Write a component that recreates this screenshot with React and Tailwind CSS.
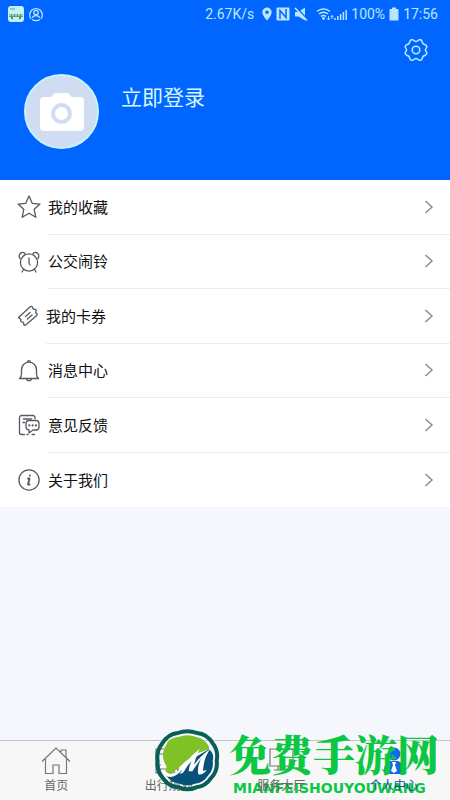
import React from "react";

const Star = () => (
  <path d="M12 1l3.200 7.300 7.800.8-5.800 5.200 1.600 8L12 18.300 5.200 22.300l1.600-8L1 9.100l7.800-.8z" />
);

const Clock = () => (
  <>
    <circle cx="12" cy="12.500" r="8.600" />
    <path d="M12 8v5l1 2M6.500 19.500l-1.500 2.500M17.500 19.500l1.500 2.500" />
    <path d="M3 8.500C1.500 6.500 2 3 5 2.500c1.500-.3 2.700.4 3.300 1.900M21 8.500C22.500 6.500 22 3 19 2.500c-1.500-.3-2.700.4-3.300 1.900" />
  </>
);

const Ticket = () => (
  <>
    <path d="M1.500 13.500L13.200 2.800c.8-.7 1.600-.6 2.200.1.200 1.900 1.200 2.700 3 2.400.9.500 1 1.400.4 2.100-.5 1.300.2 2 1.200 2.300.5.700.3 1.300-.3 1.900L9 20.800c-.8.700-1.800.6-2.300-.2.500-1.700-.3-2.900-2.300-2.800-.9-.4-.9-1.200-.4-2-.3-1.200-1.500-1.300-2.500-2.300z" />
    <path d="M8.500 12.500l4.500-4M10.500 15l4.500-4" />
  </>
);

const Bell = () => (
  <>
    <path d="M2.500 19.500c1.600-1.200 2-2.500 2-4.500v-4c0-4.200 3-7.800 7.500-7.800s7.500 3.600 7.500 7.800v4c0 2 .4 3.300 2 4.500z" />
    <path d="M10.500 3.200c.2-2 2.800-2 3 0M9.500 19.800c.3 2.600 4.700 2.600 5 0" />
  </>
);

const Feedback = () => (
  <>
    <path d="M18 5.500V4.500A2 2 0 0 0 16 2.500H4.500a2 2 0 0 0-2 2v15a2 2 0 0 0 2 2H7.500M10 21.500h1M15 21.500h2.500M6.500 6h8M6 9.500h1.500" />
    <path d="M11.500 7.500h7.500a3 3 0 0 1 3 3v3.500a3 3 0 0 1-3 3h-3l-4 3v-3.200a3 3 0 0 1-3-3v-3.300a3 3 0 0 1 2.500-3z" />
    <g fill="#555960" stroke="none">
      <circle cx="12.300" cy="12.400" r="1.100" />
      <circle cx="15.600" cy="12.400" r="1.100" />
      <circle cx="18.900" cy="12.400" r="1.100" />
    </g>
  </>
);

const Info = () => (
  <>
    <circle cx="12" cy="12" r="10.100" />
    <path d="M11 10.500h1.500l-1.500 6h1.500M12.900 7.300v.4" strokeWidth="1.800" />
  </>
);

const menu = [
  { label: "我的收藏", icon: Star },
  { label: "公交闹铃", icon: Clock },
  { label: "我的卡券", icon: Ticket, tight: true },
  { label: "消息中心", icon: Bell },
  { label: "意见反馈", icon: Feedback },
  { label: "关于我们", icon: Info },
];

const StatusBar = () => (
  <div className="flex h-7 items-center justify-between pl-2 pr-3 text-[#b9e6ff]">
    <div className="flex items-center gap-1">
      <svg viewBox="0 0 16 16" className="size-4">
        <rect width="16" height="16" rx="3" fill="#c3f2f2" />
        <path d="M2 3h5" stroke="#63a1a8" strokeWidth="1" />
        <path d="M1 8h14v3H1z" fill="#5b9a8b" />
        <path d="M1 9h14" stroke="#dff8e8" strokeWidth="1" strokeDasharray="2 1" />
        <path d="M3 12h2M11 12h2" stroke="#355b50" strokeWidth="1.500" />
      </svg>
      <svg viewBox="0 0 16 16" className="size-4" fill="none" stroke="currentColor" strokeWidth="1.300">
        <path d="M3 12.800A6.300 6.300 0 1 1 13 12.800" />
        <circle cx="8" cy="6.500" r="2.200" />
        <path d="M4.300 12c.6-3.300 6.800-3.300 7.400 0M4 13.500c2.500 1.500 5.500 1.500 8 0" />
      </svg>
    </div>
    <div className="flex items-center gap-1">
      <span className="pr-1">2.67K/s</span>
      <svg viewBox="0 0 10 14" className="h-3.5 w-2.5">
        <path fillRule="evenodd" fill="currentColor" d="M5 .5a4.700 4.700 0 0 1 4.700 4.700C9.700 8.500 5 13.500 5 13.500S.3 8.500.3 5.200A4.700 4.700 0 0 1 5 .5zm0 3a1.800 1.800 0 1 0 0 3.600A1.800 1.800 0 0 0 5 3.500z" />
      </svg>
      <svg viewBox="0 0 14 14" className="size-3.5">
        <rect x=".5" y=".5" width="13" height="13" rx="1" fill="currentColor" />
        <path d="M4 12V3.500l6 7V2" fill="none" stroke="#0066ff" strokeWidth="1.500" />
      </svg>
      <svg viewBox="0 0 14 14" className="size-3.5">
        <path d="M1 5h3.500L11 .5v13L4.500 9.500H1z" fill="currentColor" />
        <path d="M2.500.5l11 12" stroke="#0066ff" strokeWidth="1.500" />
        <path d="M1 1l12 12.500" stroke="currentColor" strokeWidth="1.600" />
      </svg>
      <svg viewBox="0 0 18 14" className="ml-1 h-3.5 w-[18px]" fill="none" stroke="currentColor" strokeWidth="1.500">
        <path d="M1 4.500c3.500-3.300 9.500-3.300 13 0M3 7c2.500-2.300 6.500-2.300 9 0M5 9.500c1.500-1.300 3.500-1.300 5 0" />
        <circle cx="7.500" cy="11.500" r=".7" />
        <path d="M12.500 13V9M11 11.500l1.500 1.500 1.500-1.500M16 8.500V12M14.700 10L16 8.500l1.300 1.500" strokeWidth="1" />
      </svg>
      <svg viewBox="0 0 13 14" className="-ml-1 h-3.5 w-[13px]" stroke="currentColor" strokeWidth="1.500">
        <path d="M1 13v-2M3.800 13v-4M6.600 13V7M9.400 13V5M12.200 13V3" />
      </svg>
      <span>100%</span>
      <svg viewBox="0 0 10 14" className="h-3.5 w-2.5" fill="currentColor">
        <path d="M3 .5h4V2h2l.5.500V13.500H.5V2.500L1 2h2z" />
      </svg>
      <span>17:56</span>
    </div>
  </div>
);

const Header = () => (
  <header className="h-[180px] bg-[#0066ff] font-[Roboto,sans-serif] text-sm">
    <StatusBar />
    <div className="flex items-start pl-6 pr-[22px] pt-2.5">
      <button className="mt-9 size-[75px] shrink-0 rounded-full border-2 border-[#c5f2ff] bg-[#cfdcf1]" aria-label="头像">
        <svg viewBox="0 0 71 71" className="size-full">
          <path d="M17 21h8l4-4h13l4 4h8q4 0 4 4v26q0 4-4 4H18q-4 0-4-4V25q0-4 4-4z" fill="#fff" />
          <circle cx="35.500" cy="37.500" r="8.500" fill="none" stroke="#cfdcf1" strokeWidth="4" />
        </svg>
      </button>
      <a href="#" className="ml-[22px] mt-[42px] font-['Noto_Sans_CJK_SC',sans-serif] text-[21px] leading-8 text-[#d9f6ff]">
        立即登录
      </a>
      <button className="ml-auto size-6 text-[#b9eaff]" aria-label="设置">
        <svg viewBox="0 0 24 24" fill="none" stroke="currentColor" strokeWidth="1.500" strokeLinejoin="round" className="size-full">
          <path d="M7.500 1.800Q9 1.500 10 2.600q2 1.600 4 0 1-1.100 2.500-.8 1.200.4 1.700 1.800.4 2.600 3 3.200 1.500.6 1.600 2 0 .8-.8 1.700-1.300 1.500 0 3 .8.900.8 1.700-.1 1.400-1.600 2-2.600.6-3 3.200-.5 1.400-1.700 1.800-1.500.3-2.500-.8-2-1.600-4 0-1 1.100-2.500.8-1.200-.4-1.700-1.800-.4-2.600-3-3.200-1.500-.6-1.600-2 0-.8.8-1.700 1.300-1.500 0-3-.8-.9-.8-1.700.1-1.400 1.600-2 2.600-.6 3-3.200.5-1.400 1.700-1.800z" />
          <circle cx="12" cy="12" r="3.800" />
        </svg>
      </button>
    </div>
  </header>
);

const Menu = () => (
  <ul className="grid h-[327px] grid-rows-6 bg-white">
    {menu.map(({ label, icon: Icon, tight }, i) => (
      <li key={label} className="flex pl-[17px]">
        <a href="#" className="flex flex-1 items-center">
          <svg
            viewBox="0 0 24 24"
            className="size-6 shrink-0"
            fill="none"
            stroke="#555960"
            strokeWidth="1.300"
            strokeLinecap="round"
            strokeLinejoin="round"
          >
            <Icon />
          </svg>
          <span
            className={`flex flex-1 items-center justify-between self-stretch pr-4 ${tight ? "ml-[5px]" : "ml-[7px]"} ${
              i < menu.length - 1 ? "border-b border-[#ececee]" : ""
            }`}
          >
            <span className="text-[15px] leading-6 text-[#111]">{label}</span>
            <svg viewBox="0 0 10 14" className="h-3.5 w-2.5" fill="none" stroke="#8e8e8e" strokeWidth="1.500">
              <path d="M1.500 1l6.500 6-6.500 6" />
            </svg>
          </span>
        </a>
      </li>
    ))}
  </ul>
);

const tabs = [
  {
    label: "首页",
    icon: <path d="M1 14.500L15 1l14 13.500M4.500 12v14.500H12V18h6v8.500h7.500V12M20 5V3h5v7.500" />,
  },
  {
    label: "出行规划",
    icon: <path d="M6 2H2v20h22V2H6M2 7h22M1 18h6M2 22v4h4v-4M20 22v4h4v-4" />,
  },
  {
    label: "服务大厅",
    icon: <path d="M4 2h23v17H4zM12 19v4M19 19v4M8 23h15" />,
  },
  {
    label: "个人中心",
    active: true,
    icon: (
      <g fill="#1768e5" stroke="none">
        <circle cx="15" cy="7" r="6.500" />
        <path d="M5 24q0-8 6-10h8q6 2 6 10 0 3-2 3H7q-2 0-2-3z" />
        <path d="M13 15h4l-1 3 2 6-3 2-3-2 2-6z" fill="#fff" />
      </g>
    ),
  },
];

// round badge + site name, sits over the tab bar
const Brand = () => (
  <div className="pointer-events-none absolute bottom-0 right-[11px] flex items-end text-[#0bc744]">
    <svg viewBox="-3 8 204 192" className="relative z-20 mb-2 mr-2 h-16 w-[68px] shrink-0">
      <path
        d="M71 23Q100 12 129 23Q160 26 176 54Q194 76 188 106Q192 136 172 157Q154 184 127 186Q100 198 74 186Q44 184 28 160Q8 138 11 108Q6 78 25 54Q42 26 71 23z"
        fill="none"
        stroke="#075f55"
        strokeWidth="12"
      />
      <path d="M73 35Q100 24 127 35Q150 38 165 64L165 72L130 84L95 108L50 148L34 138Q42 128 32 112Q20 90 35 61Q46 36 73 35z" fill="#7fc127" />
      <path d="M165 72Q182 86 176 106Q180 132 163 150Q148 174 123 175Q100 184 77 175Q48 172 36 148Q72 150 96 124L130 92z" fill="#07527b" />
      <path
        d="M24 130Q38 150 58 145Q76 139 92 117Q112 89 137 70Q126 91 120 119Q139 91 169 71Q149 96 147 137L158 134Q148 149 133 147Q128 125 142 99Q127 119 115 138L104 138Q106 117 117 99Q102 117 91 137Q87 146 76 145Q83 139 87 130Q62 161 39 153Q27 147 24 130z"
        fill="#fff"
      />
    </svg>
    <div className="flex flex-col whitespace-nowrap pb-1">
      <span className="font-['Noto_Serif_CJK_SC','Noto_Sans_CJK_SC',serif] text-[42px] font-black leading-[46px]">
        免费手游网
      </span>
      <span className="pl-1 pt-1 font-['DejaVu_Sans',sans-serif] text-[14px] font-bold leading-4">
        MIANFEISHOUYOUWANG
      </span>
    </div>
  </div>
);

const TabBar = () => (
  <nav className="relative mt-auto h-[60px] border-t border-[#bfc5c8] bg-[#f7f7f8]">
    <div className="grid h-full grid-cols-4">
      {tabs.map((tab) => (
        <a key={tab.label} href="#" className="flex flex-col items-center pt-1.5">
          <svg viewBox="0 0 30 28" className="h-7 w-[30px]" fill="none" stroke="#777" strokeWidth="1.200">
            {tab.icon}
          </svg>
          <span className={`relative z-10 text-xs leading-5 ${tab.active ? "text-[#07539a]" : "text-[#666]"}`}>
            {tab.label}
          </span>
        </a>
      ))}
    </div>
    <Brand />
  </nav>
);

export default function App() {
  return (
    <main className="flex min-h-screen flex-col bg-[#f5f7fc] font-['Noto_Sans_CJK_SC',sans-serif]">
      <Header />
      <Menu />
      <TabBar />
    </main>
  );
}
